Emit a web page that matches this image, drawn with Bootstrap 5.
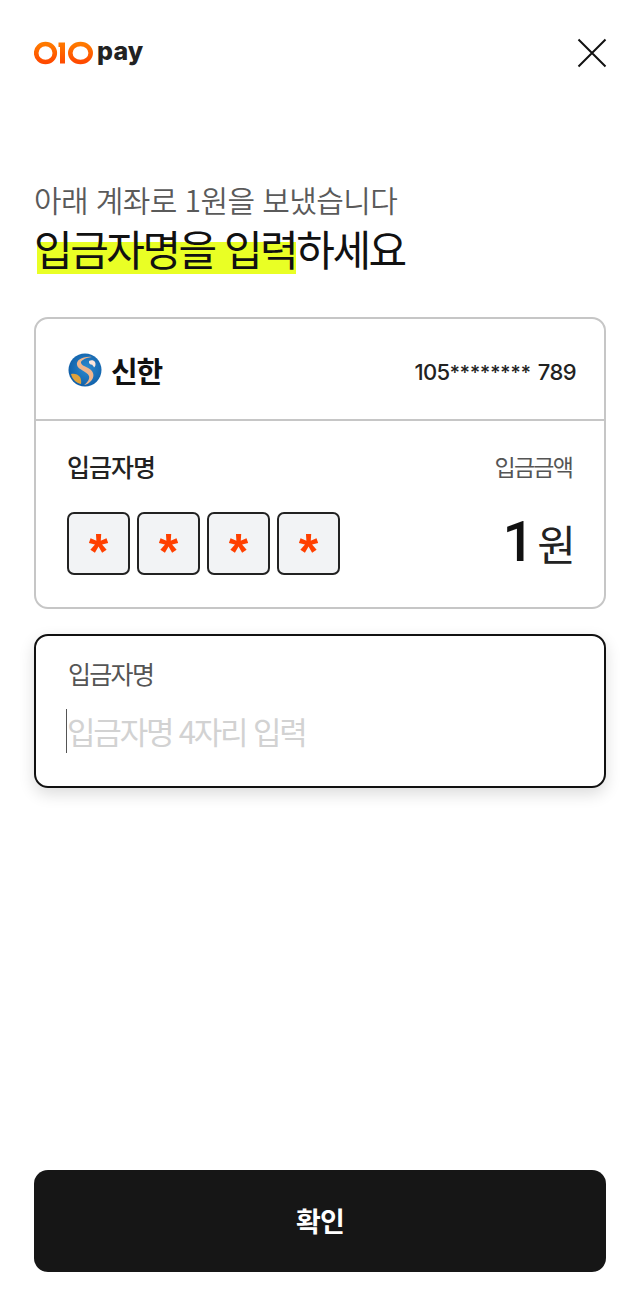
<!DOCTYPE html>
<html lang="ko">
<head>
<meta charset="utf-8">
<title>010pay</title>
<link href="https://cdn.jsdelivr.net/npm/bootstrap@5.3.0/dist/css/bootstrap.min.css" rel="stylesheet">
<style>
html,body{height:100%}
body{font-family:"Noto Sans CJK KR","Noto Sans",sans-serif;color:#111;background:#fff}
.screen{width:640px;height:1306px;padding:0 34px}
.top-bar{height:106px;padding-top:38px}
.logo-word{font-family:Inter,"Liberation Sans",sans-serif;font-weight:800;font-size:25px;line-height:28px;color:#222;letter-spacing:.2px;margin-left:3px;margin-top:-3px}
.close-x{margin-right:-1px}
.head-block{margin-top:71px;height:113px}
.sub-title{font-size:30px;line-height:44px;color:#5a5a5a;letter-spacing:-.6px;height:45px;font-weight:350}
.main-title{font-size:42px;line-height:52px;letter-spacing:-2.5px;font-weight:400;color:#111;margin:0}
.hl{background:linear-gradient(#e9ff25,#e9ff25) no-repeat 3px 20px;background-size:calc(100% - 3px) 32px;display:inline-block;height:54px;margin-bottom:-2px;vertical-align:top}
.info-box{height:292px;border:2px solid #c6c6c6;border-radius:14px;margin-top:27px}
.bank-row{height:102px;border-bottom:2px solid #c6c6c6;padding:2px 28px 0 32px}
.bank-name{font-size:29px;font-weight:700;letter-spacing:-1.2px;margin-left:9px;line-height:40px}
.acct{font-family:Inter,"Liberation Sans",sans-serif;font-size:22px;font-weight:500;letter-spacing:-.6px;color:#222;line-height:30px;padding-top:5px}
.acct-stars{font-size:19.500px;letter-spacing:0;margin-right:7px}
.dep-area{padding:27px 30px 0 31px}
.lbl-strong{font-size:25px;font-weight:500;letter-spacing:-1px;line-height:36px;color:#222}
.lbl-soft{font-size:23px;line-height:36px;color:#555;letter-spacing:-1.8px;margin-right:2px}
.code-row{margin-top:28px;gap:7px}
.code-cell{width:63px;height:63px;background:#f2f3f5;border:2px solid #222;border-radius:7px;color:#ff4000;font-family:"Liberation Sans",sans-serif;font-weight:700;font-size:50px;line-height:36px;padding-top:20px}
.amount{line-height:60px;margin-top:28px;margin-right:-2px}
.amt-num{font-family:Roboto,"Liberation Sans",sans-serif;font-weight:500;font-size:56px}
.amt-unit{font-size:42px;color:#222;margin-left:3px}
.entry-box{height:154px;border:2px solid #111;border-radius:14px;margin-top:25px;box-shadow:0 6px 16px rgba(0,0,0,.14);padding:19px 32px 0 30px}
.entry-label{font-size:25px;line-height:36px;color:#555;letter-spacing:-1.7px;padding-left:2px}
.entry-input{height:44px;margin-top:18px;border-left:1px solid #555;font-size:31px;line-height:44px;color:#d2d2d2;letter-spacing:-2.200px;white-space:nowrap}
.confirm{height:102px;background:#161616;color:#fff;border:0;border-radius:14px;font-size:27px;font-weight:700;letter-spacing:-.8px}
.confirm:hover{background:#161616;color:#fff}
.push-gap{margin-top:382px}
</style>
</head>
<body>
<div class="screen d-flex flex-column">
  <div class="top-bar d-flex justify-content-between align-items-start">
    <div class="d-flex align-items-center">
      <svg width="60" height="28" viewBox="0 0 60 28" aria-label="010">
        <defs><linearGradient id="lg" x1="0" y1="0" x2="0" y2="1"><stop offset="0" stop-color="#ff7a00"/><stop offset="1" stop-color="#ff4a00"/></linearGradient></defs>
        <ellipse cx="11.500" cy="15" rx="9.300" ry="9" fill="none" stroke="url(#lg)" stroke-width="4.600"/>
        <path d="M24.500 4.500h6.500v21h-5v-16.500h-1.500z" fill="url(#lg)"/>
        <ellipse cx="46.500" cy="15" rx="10.200" ry="9" fill="none" stroke="url(#lg)" stroke-width="4.600"/>
      </svg>
      <span class="logo-word">pay</span>
    </div>
    <svg class="close-x" width="30" height="30" viewBox="0 0 30 30"><path d="M1.500 1.500 28.500 28.500M28.500 1.500 1.500 28.500" stroke="#111" stroke-width="2" fill="none"/></svg>
  </div>
  <div class="head-block">
    <div class="sub-title">아래 계좌로 1원을 보냈습니다</div>
    <h1 class="main-title"><span class="hl">입금자명을 입력</span>하세요</h1>
  </div>
  <div class="info-box">
    <div class="bank-row d-flex align-items-center justify-content-between">
      <div class="d-flex align-items-center">
        <svg width="34" height="34" viewBox="0 0 34 34" aria-label="신한">
          <defs><radialGradient id="bl" cx=".55" cy=".45" r=".6"><stop offset="0" stop-color="#2c8bd0"/><stop offset="1" stop-color="#0f5da6"/></radialGradient></defs>
          <circle cx="17" cy="17" r="16.500" fill="url(#bl)"/>
          <path d="M24 4C15 3 8 7 9 12c1 5 10 6 12 11 1 3-2 7-5 9 6-1 11-7 9-12-2-6-11-6-12-10-.5-2 3-5 11-6z" fill="#f0b58c"/>
          <path d="M21 8c2-1.500 5-1 6 1 1 2 .5 4.500-1 5.500-.5-1.500-1.500-2-2-3-1 .5-2.500-.5-3-1.500z" fill="#fbe6dc"/>
          <path d="M3 21c3-1 7 0 9 3 1 2 1.500 4 1 7-5-1-9-5-10-10z" fill="#e0a23a"/>
        </svg>
        <span class="bank-name">신한</span>
      </div>
      <span class="acct">105<span class="acct-stars">********</span>789</span>
    </div>
    <div class="dep-area">
      <div class="d-flex justify-content-between">
        <span class="lbl-strong">입금자명</span>
        <span class="lbl-soft">입금금액</span>
      </div>
      <div class="d-flex justify-content-between align-items-start">
        <div class="code-row d-flex">
          <div class="code-cell text-center">*</div>
          <div class="code-cell text-center">*</div>
          <div class="code-cell text-center">*</div>
          <div class="code-cell text-center">*</div>
        </div>
        <div class="amount"><span class="amt-num">1</span><span class="amt-unit">원</span></div>
      </div>
    </div>
  </div>
  <div class="entry-box">
    <div class="entry-label">입금자명</div>
    <div class="entry-input">입금자명 4자리 입력</div>
  </div>
  <button type="button" class="btn confirm w-100 push-gap">확인</button>
</div>
<script src="https://cdn.jsdelivr.net/npm/bootstrap@5.3.0/dist/js/bootstrap.bundle.min.js"></script>
</body>
</html>
